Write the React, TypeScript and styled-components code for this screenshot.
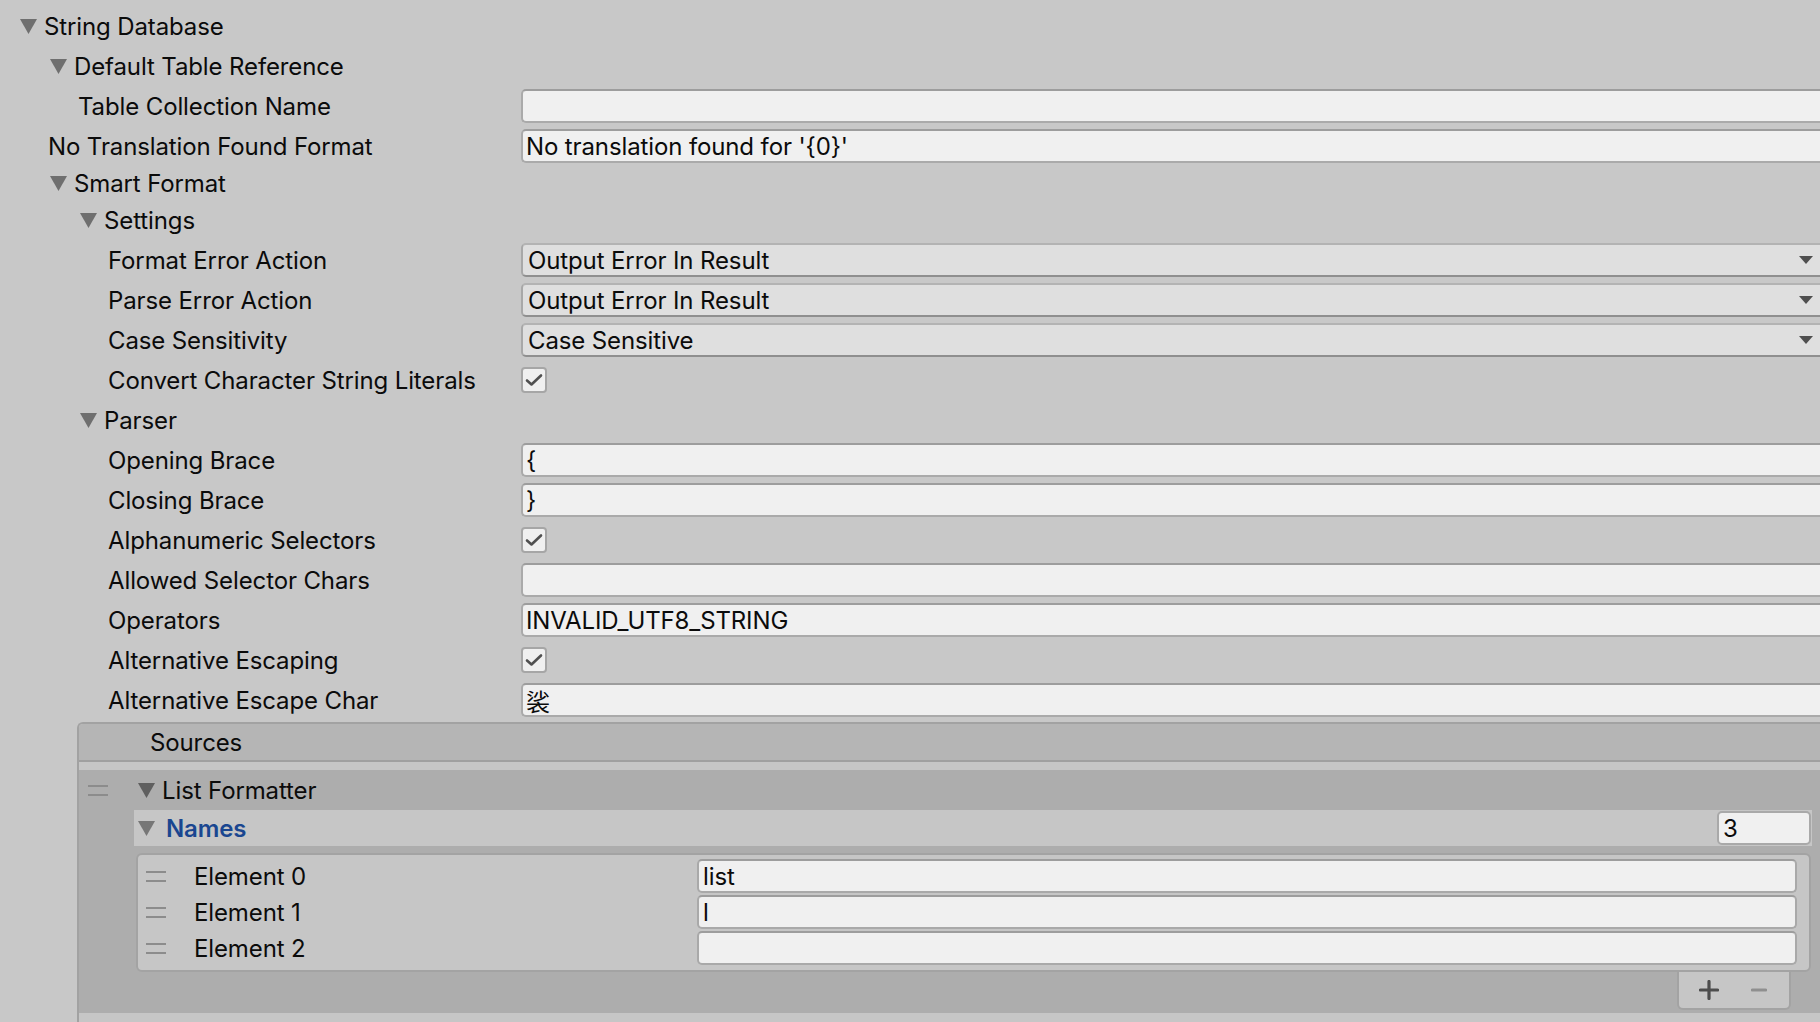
import React from "react";
import styled, { createGlobalStyle } from "styled-components";

const Global = createGlobalStyle`
  html, body {
    margin: 0;
    padding: 0;
    background: #c8c8c8;
    width: 1820px;
    height: 1022px;
    overflow: hidden;
  }
  body {
    font-family: Inter, "Noto Sans", "Noto Sans CJK SC", sans-serif;
    font-size: 24px;
    letter-spacing: -0.12px;
    color: #0b0b0b;
  }
`;

const Page = styled.div`
  width: 1820px;
  height: 1022px;
  overflow: hidden;
  padding-top: 6px;
  box-sizing: border-box;
`;

const Row = styled.div<{ $h?: number }>`
  display: grid;
  grid-template-columns: 521px 1301px;
  align-items: center;
  height: ${(p) => p.$h ?? 40}px;
`;

const Label = styled.div<{ $indent: number }>`
  padding-left: ${(p) => p.$indent}px;
  white-space: nowrap;
`;

const FoldRow = styled.div<{ $indent: number; $h?: number }>`
  display: flex;
  align-items: center;
  height: ${(p) => p.$h ?? 40}px;
  padding-left: ${(p) => p.$indent}px;
  white-space: nowrap;
`;

const TriSvg = styled.svg<{ $gap: number }>`
  flex: none;
  margin-right: ${(p) => p.$gap}px;
`;

const Triangle: React.FC<{ color?: string; gap?: number }> = ({ color = "#6f6f6f", gap = 7 }) => (
  <TriSvg $gap={gap} width="17" height="15" viewBox="0 0 17 15">
    <polygon points="0,0 17,0 8.5,15" fill={color} />
  </TriSvg>
);

const TextField = styled.div`
  height: 34px;
  box-sizing: border-box;
  background: #f0f0f0;
  border: 2px solid #aaaaaa;
  border-top-color: #9d9d9d;
  border-radius: 5px 0 0 5px;
  border-right: none;
  padding-left: 3px;
  display: flex;
  align-items: center;
  white-space: nowrap;
  overflow: hidden;
`;

const Dropdown = styled.div`
  height: 34px;
  box-sizing: border-box;
  background: #dfdfdf;
  border: 2px solid #a8a8a8;
  border-top-color: #b3b3b3;
  border-bottom-color: #8f8f8f;
  border-right: none;
  border-radius: 5px 0 0 5px;
  padding: 0 9px 0 5px;
  display: flex;
  align-items: center;
  justify-content: space-between;
  white-space: nowrap;
`;

const DropArrow = () => (
  <svg width="14" height="8" viewBox="0 0 14 8">
    <polygon points="0,0 14,0 7,8" fill="#4f4f4f" />
  </svg>
);

const CheckBox = styled.div`
  width: 26px;
  height: 26px;
  box-sizing: border-box;
  background: #f0f0f0;
  border: 2px solid #a6a6a6;
  border-radius: 4px;
  display: flex;
  align-items: center;
  justify-content: center;
`;

const Check = () => (
  <CheckBox>
    <svg width="18" height="14" viewBox="0 0 18 14">
      <path d="M2 7.5 L6.5 11.5 L16 2.5" fill="none" stroke="#505050" strokeWidth="2.6" strokeLinecap="round" strokeLinejoin="round" />
    </svg>
  </CheckBox>
);

/* ---------- Sources panel ---------- */

const Panel = styled.div`
  margin-top: 2px;
  margin-left: 77px;
  width: 1780px;
  border-left: 2px solid #a2a2a2;
  border-top: 2px solid #a2a2a2;
  border-top-left-radius: 6px;
  overflow: hidden;
`;

const PanelHeader = styled.div`
  height: 36px;
  background: #b5b5b5;
  border-bottom: 2px solid #a0a0a0;
  display: flex;
  align-items: center;
  padding-left: 71px;
`;

const HeaderStrip = styled.div`
  height: 8px;
  background: #c6c6c6;
`;

const ListBody = styled.div`
  background: #adadad;
  padding-bottom: 3px;
`;

const BottomStrip = styled.div`
  height: 20px;
  background: #c6c6c6;
`;

const Handle = styled.div<{ $ml: number }>`
  flex: none;
  width: 20px;
  height: 7px;
  margin-left: ${(p) => p.$ml}px;
  border-top: 2px solid #8c8c8c;
  border-bottom: 2px solid #8c8c8c;
`;

const SourceRow = styled.div`
  height: 40px;
  display: flex;
  align-items: center;
  white-space: nowrap;
`;

const SourceTitle = styled.div`
  margin-left: 30px;
  display: flex;
  align-items: center;
`;

const NamesRow = styled.div`
  margin-left: 55px;
  width: 1678px;
  height: 36px;
  background: #c6c6c6;
  display: flex;
  align-items: center;
  padding-left: 4px;
  box-sizing: border-box;
`;

const NamesText = styled.span`
  color: #1a4690;
  font-weight: 600;
  flex: 1;
`;

const SizeField = styled.div`
  width: 94px;
  height: 34px;
  box-sizing: border-box;
  background: #f0f0f0;
  border: 2px solid #a9a9a9;
  border-radius: 5px;
  padding-left: 4px;
  margin-right: 1px;
  display: flex;
  align-items: center;
`;

const ElementsBox = styled.div`
  margin-top: 7px;
  margin-left: 57px;
  width: 1675px;
  box-sizing: border-box;
  background: #c6c6c6;
  border: 2px solid #a3a3a3;
  border-radius: 6px;
  padding: 3px 12px 4px 0;
`;

const ElementRow = styled.div`
  height: 36px;
  display: grid;
  grid-template-columns: 559px 1fr;
  align-items: center;
`;

const ElementLabel = styled.div`
  display: flex;
  align-items: center;
  gap: 28px;
`;

const ElementField = styled.div`
  height: 34px;
  box-sizing: border-box;
  background: #f0f0f0;
  border: 2px solid #a9a9a9;
  border-top-color: #9d9d9d;
  border-radius: 5px;
  padding-left: 4px;
  display: flex;
  align-items: center;
  white-space: nowrap;
`;

const FooterWrap = styled.div`
  margin-left: 55px;
  width: 1678px;
  display: flex;
  justify-content: flex-end;
  padding-right: 21px;
  box-sizing: border-box;
`;

const FooterTab = styled.div`
  width: 114px;
  height: 38px;
  box-sizing: border-box;
  background: #c6c6c6;
  border: 2px solid #a3a3a3;
  border-top: none;
  border-radius: 0 0 6px 6px;
  display: flex;
  align-items: center;
  padding-left: 20px;
  gap: 32px;
`;

const Plus = () => (
  <svg width="20" height="20" viewBox="0 0 20 20">
    <path d="M10 1.5 V18.5 M1.5 10 H18.5" stroke="#4d4d4d" strokeWidth="3.2" strokeLinecap="round" />
  </svg>
);

const Minus = () => (
  <svg width="16" height="20" viewBox="0 0 16 20">
    <path d="M1.5 10 H14.5" stroke="#8f8f8f" strokeWidth="3.2" strokeLinecap="round" />
  </svg>
);

type Field =
  | { kind: "text"; value: string }
  | { kind: "drop"; value: string }
  | { kind: "check" };

type Line =
  | { type: "fold"; label: string; level: number; h?: number }
  | { type: "prop"; label: string; indent: number; field: Field };

const lines: Line[] = [
  { type: "fold", label: "String Database", level: 0 },
  { type: "fold", label: "Default Table Reference", level: 1 },
  { type: "prop", label: "Table Collection Name", indent: 78, field: { kind: "text", value: "" } },
  { type: "prop", label: "No Translation Found Format", indent: 48, field: { kind: "text", value: "No translation found for '{0}'" } },
  { type: "fold", label: "Smart Format", level: 1, h: 34 },
  { type: "fold", label: "Settings", level: 2 },
  { type: "prop", label: "Format Error Action", indent: 108, field: { kind: "drop", value: "Output Error In Result" } },
  { type: "prop", label: "Parse Error Action", indent: 108, field: { kind: "drop", value: "Output Error In Result" } },
  { type: "prop", label: "Case Sensitivity", indent: 108, field: { kind: "drop", value: "Case Sensitive" } },
  { type: "prop", label: "Convert Character String Literals", indent: 108, field: { kind: "check" } },
  { type: "fold", label: "Parser", level: 2 },
  { type: "prop", label: "Opening Brace", indent: 108, field: { kind: "text", value: "{" } },
  { type: "prop", label: "Closing Brace", indent: 108, field: { kind: "text", value: "}" } },
  { type: "prop", label: "Alphanumeric Selectors", indent: 108, field: { kind: "check" } },
  { type: "prop", label: "Allowed Selector Chars", indent: 108, field: { kind: "text", value: "" } },
  { type: "prop", label: "Operators", indent: 108, field: { kind: "text", value: "INVALID_UTF8_STRING" } },
  { type: "prop", label: "Alternative Escaping", indent: 108, field: { kind: "check" } },
  { type: "prop", label: "Alternative Escape Char", indent: 108, field: { kind: "text", value: "裟" } },
];

const renderField = (f: Field) => {
  if (f.kind === "check") return <Check />;
  if (f.kind === "drop")
    return (
      <Dropdown>
        <span>{f.value}</span>
        <DropArrow />
      </Dropdown>
    );
  return <TextField>{f.value}</TextField>;
};

const elements = [
  { label: "Element 0", value: "list" },
  { label: "Element 1", value: "l" },
  { label: "Element 2", value: "" },
];

export default function App() {
  return (
    <>
      <Global />
      <Page>
        {lines.map((l, i) =>
          l.type === "fold" ? (
            <FoldRow key={i} $indent={20 + 30 * l.level} $h={l.h}>
              <Triangle />
              {l.label}
            </FoldRow>
          ) : (
            <Row key={i}>
              <Label $indent={l.indent}>{l.label}</Label>
              {renderField(l.field)}
            </Row>
          )
        )}
        <Panel>
          <PanelHeader>Sources</PanelHeader>
          <HeaderStrip />
          <ListBody>
            <SourceRow>
              <Handle $ml={9} />
              <SourceTitle>
                <Triangle color="#5f5f5f" gap={7} />
                List Formatter
              </SourceTitle>
            </SourceRow>
            <NamesRow>
              <Triangle color="#777777" gap={11} />
              <NamesText>Names</NamesText>
              <SizeField>3</SizeField>
            </NamesRow>
            <ElementsBox>
              {elements.map((e) => (
                <ElementRow key={e.label}>
                  <ElementLabel>
                    <Handle $ml={8} />
                    {e.label}
                  </ElementLabel>
                  <ElementField>{e.value}</ElementField>
                </ElementRow>
              ))}
            </ElementsBox>
            <FooterWrap>
              <FooterTab>
                <Plus />
                <Minus />
              </FooterTab>
            </FooterWrap>
          </ListBody>
          <BottomStrip />
        </Panel>
      </Page>
    </>
  );
}
